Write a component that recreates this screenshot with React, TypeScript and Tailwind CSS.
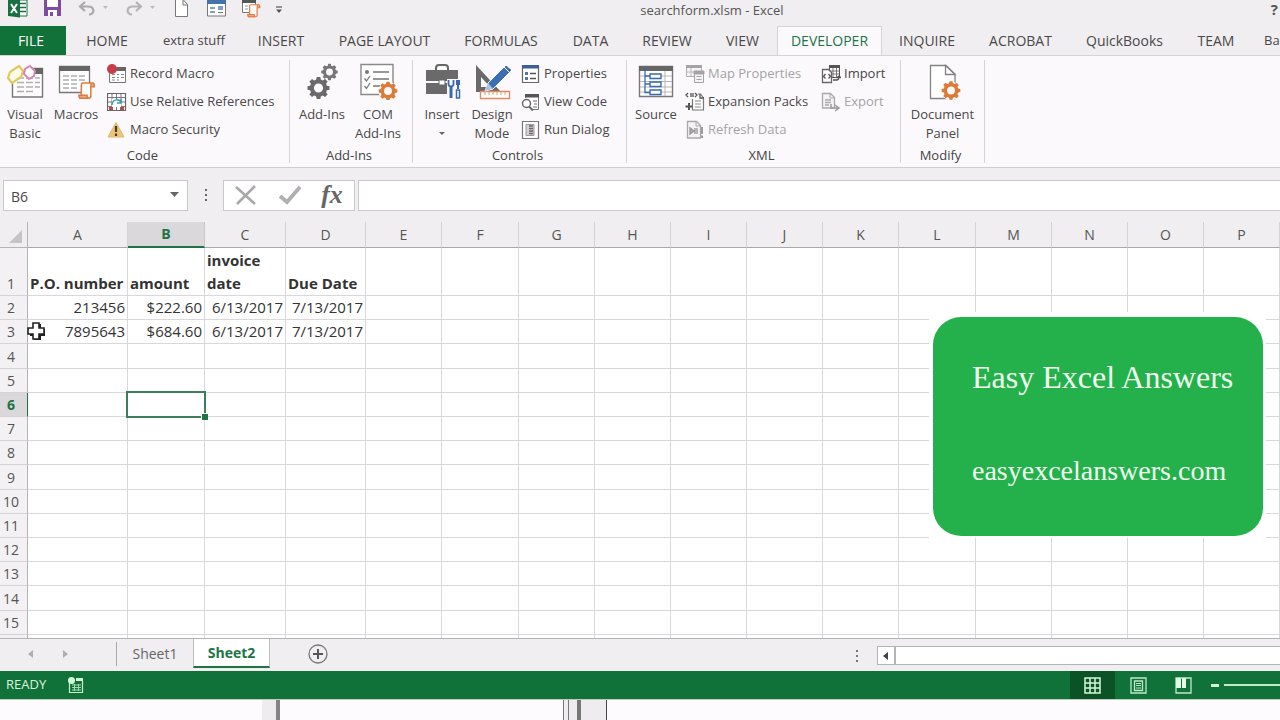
import type { ReactNode } from "react";

const GEAR =
  "M-1.8-11h3.6l.5 2.6 2 .8 2.2-1.5 2.6 2.6-1.500 2.200.8 2 2.6.5v3.6l-2.6.5-.8 2 1.5 2.2-2.6 2.6-2.2-1.500-2 .8-.5 2.6h-3.6l-.5-2.6-2-.8-2.200 1.500-2.600-2.600 1.500-2.200-.8-2-2.600-.5v-3.600l2.600-.5.8-2-1.500-2.200 2.600-2.600 2.200 1.500 2-.8zM0-4.600a4.600 4.600 0 1 0 0 9.200a4.600 4.600 0 1 0 0-9.200z";

function Gear({ x, y, s, fill }: { x: number; y: number; s: number; fill: string }) {
  return <path transform={`translate(${x} ${y}) scale(${s})`} fill={fill} fillRule="evenodd" d={GEAR} />;
}

function Big({ children }: { children: ReactNode }) {
  return (
    <svg viewBox="0 0 40 40" className="h-10 w-10 shrink-0" fill="none" aria-hidden="true">
      {children}
    </svg>
  );
}

function Small({ children }: { children: ReactNode }) {
  return (
    <svg viewBox="0 0 20 20" className="h-5 w-5 shrink-0" fill="none" aria-hidden="true">
      {children}
    </svg>
  );
}

function ScrollShape({ x, y, s }: { x: number; y: number; s: number }) {
  return (
    <g transform={`translate(${x} ${y}) scale(${s})`} stroke="#e07a3f" strokeWidth="1.6" fill="#fff">
      <path d="M5 1h11c-2 0-2.500 1-2.500 3v11c0 1.500-1 2-2.500 2H1.500c1.500 0 2-1 2-2.500V3.500C3.500 2 4 1 5 1z" />
      <path d="M13.500 5H17V3c0-1.200-.5-2-1.500-2M1 14h8.500c0 2 .5 3 1.500 3H2.500C1.500 17 1 16 1 14z" fill="#f3a67b" />
    </g>
  );
}

const VisualBasicIcon = () => (
  <Big>
    <path d="M7.500 15.500V37h30V8.500H28" fill="#fff" stroke="#777" strokeWidth="1.400" />
    <path d="M30 8h8v6h-8z" fill="#666" />
    <path d="M12 18h7m2 0h7m2 0h5M12 22.500h7m2 0h7m2 0h5M12 27h7m2 0h7m2 0h5M12 31.500h7m2 0h7" stroke="#b0adb0" strokeWidth="1.300" />
    <path d="m5 12 9-6 4 5-2 6-9 6-4-5z" fill="#fffbe8" stroke="#dccb62" strokeWidth="2.200" />
    <path d="m20 9 5-3 5 5-1 5-5 3-5-5z" fill="#fff" stroke="#d885ae" strokeWidth="2" />
  </Big>
);

const MacrosIcon = () => (
  <Big>
    <path d="M3.500 6.500h30v26h-30z" fill="#fff" stroke="#777" strokeWidth="1.300" />
    <path d="M3 6h31v5H3z" fill="#666" />
    <path d="M7 16h6m2 0h6m2 0h6M7 20h6m2 0h6m2 0h6M7 24h6m2 0h6M7 28h6m2 0h6" stroke="#b0adb0" strokeWidth="1.300" />
    <ScrollShape x={22} y={22} s={0.95} />
  </Big>
);

const AddInsIcon = () => (
  <Big>
    <Gear x={16.500} y={28} s={1} fill="#6a6a6a" />
    <Gear x={27.500} y={12} s={0.75} fill="#777" />
  </Big>
);

const ComAddInsIcon = () => (
  <Big>
    <path d="M3 4.500h32v30H3z" fill="#fff" stroke="#8a888a" strokeWidth="1.400" />
    <circle cx="9" cy="12" r="2" fill="#777" />
    <path d="M15 12h16M15 19h16M15 26h7" stroke="#777" strokeWidth="1.400" />
    <path d="m6.500 18.500 2 2.500 3.500-5M6.500 26l2 2.500L12 23" stroke="#777" strokeWidth="1.300" />
    <circle cx="30" cy="31" r="9.500" fill="#fbf9fb" />
    <Gear x={30} y={31} s={0.85} fill="#dd7a38" />
  </Big>
);

const InsertIcon = () => (
  <Big>
    <path d="M14 10V8c0-2 1-3 3-3h6c2 0 3 1 3 3v2" stroke="#666" strokeWidth="2" />
    <path d="M4 10h32v11H4zM4 23h32v11H4z" fill="#6a6a6a" />
    <path d="M17 20h6v5h-6z" fill="#fff" stroke="#666" />
    <path d="M25 19h15v20H25z" fill="#fbf9fb" />
    <path d="M26.500 20v4c0 2 1.500 2.500 2.500 2.500s2.500-.5 2.500-2.500v-4" stroke="#396ab0" strokeWidth="1.800" />
    <path d="M27.500 26h3v12h-3z" fill="#396ab0" />
    <path d="M34 20h4v5h-1v4h-2v-4h-1z" fill="#396ab0" />
    <path d="M34.500 30h3v8h-3z" fill="#fff" stroke="#396ab0" strokeWidth="1.500" />
  </Big>
);

const DesignIcon = () => (
  <Big>
    <path fillRule="evenodd" d="M4 5v27h25zM9 17v10h9z" fill="#6a6a6a" />
    <path d="M8.500 31.500h29v7h-29z" fill="#fff" stroke="#e28a66" strokeWidth="1.400" />
    <path d="M13 32v3m4-3v3m4-3v3m4-3v3m4-3v3m4-3v3" stroke="#d9a06a" />
    <path d="m13 31 3-8L34 5l6 5-19 19z" fill="#3d6db5" stroke="#fff" />
    <path d="m13 31 3-8 5 5.500z" fill="#a9c3e6" />
    <path d="m32 7 5.500 5.500" stroke="#fff" />
  </Big>
);

const SourceIcon = () => (
  <Big>
    <path d="M3.500 6.500h33v30h-33z" fill="#fff" stroke="#777" strokeWidth="1.400" />
    <path d="M3 6h34v5H3z" fill="#666" />
    <path d="M4 16h32M4 21.500h32M4 27h32M4 32h32M29 11v25" stroke="#b5b5b5" />
    <path d="M9 7v25.500h5M9 16h5M9 24h5" stroke="#396ab0" strokeWidth="1.300" />
    <path d="M14 14h11v4.500H14zM14 22h11v4.500H14zM14 30h11v4.500H14z" fill="#fff" stroke="#396ab0" strokeWidth="1.400" />
  </Big>
);

const DocumentIcon = () => (
  <Big>
    <path d="M7.500 5.500H23l9 8.500v24.500H7.500z" fill="#fff" stroke="#858285" strokeWidth="1.300" />
    <path d="M22.500 5.500V14.500H32z" fill="#fff" stroke="#858285" strokeWidth="1.300" />
    <circle cx="28" cy="31" r="9.500" fill="#fbf9fb" />
    <Gear x={28} y={30.500} s={0.85} fill="#dd7a38" />
  </Big>
);

const RecordIcon = () => (
  <Small>
    <path d="M2.500 5.500h16v13h-16z" fill="#fff" stroke="#777" />
    <path d="M9 3h10v4H9z" fill="#666" />
    <path d="M5 10.500h3m2 0h2m2 0h3M5 13.500h3m2 0h2m2 0h3M5 16h3m2 0h2" stroke="#888" />
    <circle cx="5" cy="5" r="5" fill="#c53d4a" />
  </Small>
);

const RelativeIcon = () => (
  <Small>
    <path d="M.5 1.500h18v17H.5z" fill="#fff" stroke="#666" strokeWidth="1.200" />
    <path d="M1 5.500h17M1 10h17M1 14.500h17M5 2v16M9.500 2v16M14 2v16" stroke="#777" />
    <path d="M5 7h9v8H5z" fill="#fff" />
    <path d="M5 13c0-5 6-7 9-3M14 7v4h-4" stroke="#3b9bb0" strokeWidth="1.500" />
    <path d="M2 15h4v3H2zM13 15h4v3h-4z" fill="#b34b4b" />
  </Small>
);

const WarningIcon = () => (
  <Small>
    <path d="M9 2.500 17 17H1z" fill="#ecc57c" stroke="#e3b768" strokeLinejoin="round" />
    <path d="M9 6v6M9 13.500V16" stroke="#4a3a20" strokeWidth="2.200" />
  </Small>
);

const PropertiesIcon = () => (
  <Small>
    <path d="M1.500 1.500h16v17h-16z" fill="#fff" stroke="#666" strokeWidth="1.200" />
    <path d="M1 1h17v3.500H1z" fill="#3e5f94" />
    <path d="M4 8h3v3H4zM4 13h3v3H4z" fill="#5577a8" />
    <path d="M9 9.500h6M9 14.500h6" stroke="#555" strokeWidth="1.300" />
  </Small>
);

const ViewCodeIcon = () => (
  <Small>
    <path d="M4.500 6V2.500h13v15H11" fill="#fff" stroke="#777" />
    <path d="M4 2h14v3.500H4z" fill="#555" />
    <path d="M12 9h4M13 12h3M12 15h4" stroke="#666" />
    <circle cx="5.500" cy="11.500" r="4" fill="#fff" stroke="#666" strokeWidth="1.500" />
    <path d="m8 14.500 4 4" stroke="#666" strokeWidth="2" />
  </Small>
);

const RunDialogIcon = () => (
  <Small>
    <path d="M1.500 1.500h16v17h-16z" fill="#fff" stroke="#777" strokeWidth="1.200" />
    <path d="M5 4.500h8v11H5z" fill="#d4d2d4" stroke="#999" />
    <path d="M8 6h4M8 8.500h4M8 11h4M8 13.500h4" stroke="#666" strokeWidth="1.400" />
  </Small>
);

const MapIcon = () => (
  <Small>
    <path d="M1.500 1.500h15v11h-15z" fill="#f5f3f5" stroke="#b0aeb0" />
    <path d="M1 1h16v3H1z" fill="#a5a3a5" />
    <path d="M2 8h14M6 4v8" stroke="#bbb" />
    <path d="M9.500 7.500h9v11h-9z" fill="#f5f3f5" stroke="#a5a3a5" />
    <path d="M9 7h10v3H9zM11.500 12.500h5M11.500 15.500h5" fill="#a5a3a5" stroke="#a5a3a5" />
  </Small>
);

const ExpansionIcon = () => (
  <Small>
    <path d="M7.500 7V18h11V6l-3-4H13" fill="#fff" stroke="#777" strokeWidth="1.200" />
    <path d="m3 1-2 2 2 2M6 1v4M8 1v4m2-4 2 2-2 2M15 2v4h4" stroke="#555" strokeWidth="1.300" />
    <path d="M10 9h6M10 12h6M10 15h6" stroke="#888" />
    <path d="M4 11v7M.5 14.500h7" stroke="#555" strokeWidth="2" />
  </Small>
);

const RefreshIcon = () => (
  <Small>
    <path d="M2.500 1.500h9l4 4V18h-13z" fill="#f5f3f5" stroke="#aaa8aa" strokeWidth="1.300" />
    <path d="M11 2v4h4" stroke="#aaa8aa" />
    <path d="M5 8v6l4-3zM10 8v6M12 8v6" stroke="#9c9a9c" strokeWidth="1.400" fill="#aaa" />
    <path d="M17 7v7M17 15.500V18" stroke="#9c9a9c" strokeWidth="2" />
  </Small>
);

const ImportIcon = () => (
  <Small>
    <path d="M8.500 1.500h10v12h-10z" fill="#fff" stroke="#555" />
    <path d="M8 1h11v3H8z" fill="#555" />
    <path d="M9 7h9M9 10h9M12 4v9M15.500 4v9" stroke="#777" />
    <path d="M1.500 5.500h6l3 3v10h-9z" fill="#fff" stroke="#666" strokeWidth="1.300" />
    <path d="m4.500 10-2 2.500 2 2m3-4.500 2 2.500-2 2M12 16h3.500c2 0 2.500-1 2.500-3m-2.500 1 2.500-2 2 2" stroke="#555" strokeWidth="1.300" />
  </Small>
);

const ExportIcon = () => (
  <Small>
    <path d="M1.500 1.500h8l4 4V16h-12z" fill="#f5f3f5" stroke="#aaa8aa" strokeWidth="1.300" />
    <path d="M9 2v4h4" stroke="#aaa8aa" />
    <path d="M4 8h6M4 10.500h6M4 13h4" stroke="#aaa8aa" strokeWidth="1.500" />
    <path d="M10 12v4h7m-3-3 4 3-4 3" stroke="#9c9a9c" strokeWidth="1.500" />
  </Small>
);

function BigButton({ icon, lines, width, caret }: { icon: ReactNode; lines: string[]; width: string; caret?: boolean }) {
  return (
    <button type="button" className={`flex shrink-0 flex-col items-center ${width}`}>
      {icon}
      <span className="mt-[5px] flex flex-col items-center whitespace-nowrap leading-[19px]">
        {lines.map((l) => (
          <span key={l}>{l}</span>
        ))}
        {caret && (
          <svg viewBox="0 0 6 19" className="h-[19px] w-[6px]" aria-hidden="true">
            <path d="M0 8h6l-3 3z" fill="#666" />
          </svg>
        )}
      </span>
    </button>
  );
}

function SmallButton({ icon, label, disabled }: { icon: ReactNode; label: string; disabled?: boolean }) {
  return (
    <button type="button" disabled={disabled} className="flex h-7 items-center gap-[3px] whitespace-nowrap disabled:text-[#a5a3a5]">
      {icon}
      {label}
    </button>
  );
}

function Group({ name, width, children }: { name: string; width: string; children: ReactNode }) {
  return (
    <section aria-label={name} className={`flex shrink-0 flex-col border-r border-[#d5d3d5] ${width}`}>
      <div className="flex h-[88px] items-start">{children}</div>
      <div className="pr-1 pt-[2px] text-center leading-[16px] text-[#444]">{name}</div>
    </section>
  );
}

const TABS = [
  { label: "HOME", w: "w-[82px]" },
  { label: "extra stuff", w: "w-[92px] text-[13px]" },
  { label: "INSERT", w: "w-[82px]" },
  { label: "PAGE LAYOUT", w: "w-[125px]" },
  { label: "FORMULAS", w: "w-[108px]" },
  { label: "DATA", w: "w-[71px]" },
  { label: "REVIEW", w: "w-[82px]" },
  { label: "VIEW", w: "w-[69px]" },
  { label: "DEVELOPER", w: "w-[105px]" },
  { label: "INQUIRE", w: "w-[90px]" },
  { label: "ACROBAT", w: "w-[97px]" },
  { label: "QuickBooks", w: "w-[111px]" },
  { label: "TEAM", w: "w-[72px]" },
];

const COLUMNS = [
  { n: "A", w: "w-[100px]" },
  { n: "B", w: "w-[77px]" },
  { n: "C", w: "w-[81px]" },
  { n: "D", w: "w-[80px]" },
  { n: "E", w: "w-[76px]" },
  { n: "F", w: "w-[77px]" },
  { n: "G", w: "w-[76px]" },
  { n: "H", w: "w-[76px]" },
  { n: "I", w: "w-[76px]" },
  { n: "J", w: "w-[76px]" },
  { n: "K", w: "w-[76px]" },
  { n: "L", w: "w-[77px]" },
  { n: "M", w: "w-[76px]" },
  { n: "N", w: "w-[76px]" },
  { n: "O", w: "w-[76px]" },
  { n: "P", w: "w-[76px]" },
];

const DATA: Record<number, string[]> = {
  1: ["P.O. number", "amount", "invoice date", "Due Date"],
  2: ["213456", "$222.60", "6/13/2017", "7/13/2017"],
  3: ["7895643", "$684.60", "6/13/2017", "7/13/2017"],
};

const ROWS = Array.from({ length: 15 }, (_, i) => i + 1);

function TitleBar() {
  return (
    <header className="flex h-[26px] shrink-0 items-start text-[#555]">
      <div className="flex w-[284px] shrink-0">
        <svg viewBox="0 0 284 20" className="h-5 w-[284px]" fill="none" aria-label="Quick access toolbar">
          <path d="M19 0h8v16h-8z" fill="#fff" stroke="#1d7044" />
          <path d="M20 3.500h6M20 7.500h6M20 11.500h6" stroke="#1d7044" strokeWidth="1.500" />
          <path d="M8 0h12v17.500L8 16z" fill="#17703f" />
          <path d="m11 4 6 9m0-9-6 9" stroke="#fff" strokeWidth="2" />
          <path d="M44 0h17v16H44z" fill="#7d4ba0" />
          <path d="M47 0h11v7H47zM48 10h9v6h-9z" fill="#fff" />
          <path d="M50 12h3v4h-3z" fill="#7d4ba0" />
          <path d="M85 2 80 6.500l5 4.500M80 6.500h8c7 0 7 8 1 8" stroke="#aba9ab" strokeWidth="2.200" />
          <path d="M103 6h5l-2.500 3zM150 6h5l-2.500 3z" fill="#bbb" />
          <path d="m136 2 5 4.500-5 4.500M141 6.500h-8c-7 0-7 8-1 8" stroke="#b5b3b5" strokeWidth="2.200" />
          <path d="M175.500 0v16.500h12V4.500L183.500 0M183 0v5h5" fill="#fff" stroke="#777" />
          <path d="M207.500.5h18v15.500h-18z" fill="#fff" stroke="#777" />
          <path d="M207 0h19v4h-19z" fill="#4472a8" />
          <path d="M210 7h5v2h-5zM210 11h5v2h-5zM218 6h5v4h-5z" fill="#7fa0cb" />
          <path d="M218 12.500h5" stroke="#777" />
          <path d="M242.500.5h13v12h-13z" fill="#fff" stroke="#777" />
          <path d="M242 0h14v3h-14z" fill="#555" />
          <path d="M245 6h3m2 0h3M245 9h3" stroke="#999" />
          <ScrollShape x={247} y={4} s={0.75} />
          <path d="M276 7h6" stroke="#555" strokeWidth="1.200" />
          <path d="M276 9.500h6l-3 3.500z" fill="#555" />
        </svg>
      </div>
      <h1 className="flex-1 text-center leading-[20px]">searchform.xlsm - Excel</h1>
      <div className="flex w-[140px] shrink-0 justify-end pr-[2px]">
        <button type="button" aria-label="Help" className="text-[15px] font-bold leading-[18px]">?</button>
      </div>
    </header>
  );
}

function RibbonTabs() {
  return (
    <nav className="flex h-[30px] shrink-0 overflow-hidden border-b border-[#d5d3d5] text-sm">
      <button type="button" className="w-[66px] shrink-0 bg-[#117239] pr-1 text-white">FILE</button>
      {TABS.map((t) => (
        <button
          key={t.label}
          type="button"
          className={`shrink-0 whitespace-nowrap ${t.w} ${
            t.label === "DEVELOPER" ? "border-x border-t border-[#d5d3d5] bg-[#fbf9fb] text-[#217346]" : ""
          }`}
        >
          {t.label}
        </button>
      ))}
      <button type="button" className="shrink-0 pl-3 text-[13px]">Ba</button>
    </nav>
  );
}

function Ribbon() {
  return (
    <div className="flex h-[112px] shrink-0 overflow-hidden border-b border-[#cfcdcf] bg-[#fbf9fb] pb-1 pt-1">
      <Group name="Code" width="w-[290px]">
        <BigButton icon={<VisualBasicIcon />} lines={["Visual", "Basic"]} width="w-[50px]" />
        <BigButton icon={<MacrosIcon />} lines={["Macros"]} width="w-[52px]" />
        <div className="pl-[5px]">
          <SmallButton icon={<RecordIcon />} label="Record Macro" />
          <SmallButton icon={<RelativeIcon />} label="Use Relative References" />
          <SmallButton icon={<WarningIcon />} label="Macro Security" />
        </div>
      </Group>
      <Group name="Add-Ins" width="w-[123px]">
        <div className="flex pl-[2px]">
          <BigButton icon={<AddInsIcon />} lines={["Add-Ins"]} width="w-[60px]" />
          <BigButton icon={<ComAddInsIcon />} lines={["COM", "Add-Ins"]} width="w-[52px]" />
        </div>
      </Group>
      <Group name="Controls" width="w-[214px]">
        <div className="flex pl-1">
          <BigButton icon={<InsertIcon />} lines={["Insert"]} width="w-[50px]" caret />
          <BigButton icon={<DesignIcon />} lines={["Design", "Mode"]} width="w-[50px]" />
        </div>
        <div className="pl-1">
          <SmallButton icon={<PropertiesIcon />} label="Properties" />
          <SmallButton icon={<ViewCodeIcon />} label="View Code" />
          <SmallButton icon={<RunDialogIcon />} label="Run Dialog" />
        </div>
      </Group>
      <Group name="XML" width="w-[274px]">
        <div className="flex pl-1">
          <BigButton icon={<SourceIcon />} lines={["Source"]} width="w-[50px]" />
        </div>
        <div className="w-[140px] pl-1">
          <SmallButton icon={<MapIcon />} label="Map Properties" disabled />
          <SmallButton icon={<ExpansionIcon />} label="Expansion Packs" />
          <SmallButton icon={<RefreshIcon />} label="Refresh Data" disabled />
        </div>
        <div>
          <SmallButton icon={<ImportIcon />} label="Import" />
          <SmallButton icon={<ExportIcon />} label="Export" disabled />
        </div>
      </Group>
      <Group name="Modify" width="w-[84px]">
        <BigButton icon={<DocumentIcon />} lines={["Document", "Panel"]} width="w-full" />
      </Group>
    </div>
  );
}

function FormulaBar() {
  return (
    <div className="flex h-[54px] shrink-0 items-center pl-[3px]">
      <div className="flex h-[31px] w-[185px] shrink-0 items-center border border-[#c9c7c9] bg-white">
        <input aria-label="Name box" defaultValue="B6" className="h-full min-w-0 flex-1 bg-transparent pl-[7px] pt-[2px] text-sm outline-none" />
        <button type="button" aria-label="Open name list" className="w-6">
          <svg viewBox="0 0 24 10" className="h-[10px] w-6" aria-hidden="true">
            <path d="M7 2h9l-4.500 5z" fill="#666" />
          </svg>
        </button>
      </div>
      <svg viewBox="0 0 35 16" className="h-4 w-[35px] shrink-0" aria-hidden="true">
        <path d="M17 2h2v2h-2zM17 7h2v2h-2zM17 12h2v2h-2z" fill="#666" />
      </svg>
      <div className="flex h-[31px] w-[132px] shrink-0 items-center border border-[#c9c7c9] bg-white">
        <button type="button" aria-label="Cancel" className="flex w-11 justify-center">
          <svg viewBox="0 0 22 20" className="h-5 w-[22px]" aria-hidden="true">
            <path d="m1 2 19 17M20 1 2 19" stroke="#a9a7a9" strokeWidth="2.600" fill="none" />
          </svg>
        </button>
        <button type="button" aria-label="Enter" className="flex w-11 justify-center">
          <svg viewBox="0 0 22 20" className="h-5 w-[22px]" aria-hidden="true">
            <path d="m1 11 7 6L21 2" stroke="#b1afb1" strokeWidth="3.800" fill="none" />
          </svg>
        </button>
        <button type="button" aria-label="Insert function" className="w-10 font-['Liberation_Serif',serif] text-[26px] font-bold italic leading-[26px] text-[#666]">
          fx
        </button>
      </div>
      <input aria-label="Formula" className="ml-[3px] h-[31px] min-w-0 flex-1 border border-r-0 border-[#c9c7c9] bg-white px-2 outline-none" />
    </div>
  );
}

function Sheet() {
  return (
    <main className="relative h-[416px] shrink-0 overflow-hidden bg-white">
      <table className="w-full table-fixed border-separate border-spacing-0">
        <colgroup>
          <col className="w-[28px]" />
          {COLUMNS.map((c) => (
            <col key={c.n} className={c.w} />
          ))}
          <col />
        </colgroup>
        <thead>
          <tr className="h-[26px] bg-[#f0eef0] text-sm text-[#555]">
            <td className="border-b border-r border-[#b5b3b5] p-0">
              <svg viewBox="0 0 27 25" className="h-[25px] w-[27px]" aria-label="Select all">
                <path d="M22 8v13H9z" fill="#c5c3c5" />
              </svg>
            </td>
            {COLUMNS.map((c) => (
              <th
                key={c.n}
                scope="col"
                className={
                  c.n === "B"
                    ? "border-b-2 border-r border-b-[#217346] border-r-[#c9c7c9] bg-[#dad8da] p-0 font-bold leading-[22px] text-[#217346]"
                    : "border-b border-r border-b-[#aaa8aa] border-r-[#d5d3d5] p-0 font-normal leading-[22px]"
                }
              >
                {c.n}
              </th>
            ))}
            <td className="border-b border-[#aaa8aa] p-0" />
          </tr>
        </thead>
        <tbody>
          {ROWS.map((r) => (
            <tr key={r} className={r === 1 ? "h-[48px]" : r % 5 === 4 ? "h-[25px]" : "h-[24px]"}>
              <th
                scope="row"
                className={`border-b border-r border-b-[#d5d3d5] p-0 pr-[5px] text-center align-bottom text-sm leading-[23px] ${
                  r === 6 ? "border-r-[#217346] bg-[#dad8da] font-bold text-[#217346]" : "border-r-[#b5b3b5] bg-[#f3f1f3] font-normal text-[#555]"
                }`}
              >
                {r}
              </th>
              {COLUMNS.map((c, i) => (
                <td
                  key={c.n}
                  className={`border-b border-r border-[#d9d7dc] p-0 align-bottom text-[15px] text-[#333] ${
                    r === 1 ? "pl-[2px] font-bold leading-[23px]" : "pr-[2px] text-right leading-[23px]"
                  } ${r === 6 && i === 1 ? "relative" : ""}`}
                >
                  {DATA[r]?.[i]}
                  {r === 6 && i === 1 && (
                    <span className="absolute -inset-[2px] border-2 border-[#3c7d5c]">
                      <span className="absolute -bottom-1 -right-1 h-[7px] w-[7px] border-l border-t border-white bg-[#217346]" />
                    </span>
                  )}
                </td>
              ))}
              <td className="border-b border-[#d9d7dc] p-0" />
            </tr>
          ))}
          <tr className="h-6">
            <td className="border-r border-[#b5b3b5] bg-[#f3f1f3] p-0" />
            {COLUMNS.map((c) => (
              <td key={c.n} className="border-r border-[#d9d7dc] p-0" />
            ))}
            <td className="p-0" />
          </tr>
        </tbody>
      </table>

      <svg viewBox="0 0 20 20" className="absolute left-[26px] top-[99px] h-5 w-5" aria-hidden="true">
        <path d="M8 3h7v5h4v7h-4v4H8v-4H4V8h4z" fill="#222" />
        <path d="M7 2h6v5h5v6h-5v5H7v-5H2V7h5z" fill="#fff" stroke="#222" strokeWidth="1.600" />
      </svg>

      <aside className="absolute right-[14px] top-[90px] bg-white pb-[2px] pl-1 pr-[3px] pt-[5px]">
        <div className="flex h-[219px] w-[330px] flex-col gap-[54px] rounded-[28px] bg-[#24b14c] pl-[39px] pt-[40px] font-['Liberation_Serif',serif] leading-[40px] text-[#f0fff0]">
          <p className="whitespace-nowrap text-[32px]">Easy Excel Answers</p>
          <p className="whitespace-nowrap text-[28px]">easyexcelanswers.com</p>
        </div>
      </aside>
    </main>
  );
}

function SheetTabs() {
  return (
    <div className="flex h-[33px] shrink-0 items-start border-t border-[#b5b3b5] text-sm">
      <div className="flex h-[30px] w-[116px] items-center gap-7 pl-7">
        <button type="button" aria-label="Previous sheet">
          <svg viewBox="0 0 6 8" className="h-2 w-[6px]" aria-hidden="true"><path d="M5 0v8L0 4z" fill="#b0aeb0" /></svg>
        </button>
        <button type="button" aria-label="Next sheet">
          <svg viewBox="0 0 6 8" className="h-2 w-[6px]" aria-hidden="true"><path d="M1 0v8l5-4z" fill="#b0aeb0" /></svg>
        </button>
      </div>
      <button type="button" className="mt-[3px] h-6 w-[77px] border-l border-[#aaa8aa] text-[#666]">Sheet1</button>
      <button type="button" className="h-[29px] w-[77px] border-x border-b-2 border-x-[#c0bec0] border-b-[#217346] bg-white pt-px font-bold text-[#217346]">
        Sheet2
      </button>
      <button type="button" aria-label="New sheet" className="ml-[38px] mt-[5px]">
        <svg viewBox="0 0 20 20" className="h-5 w-5" fill="none" aria-hidden="true">
          <circle cx="10" cy="10" r="9" stroke="#777" strokeWidth="1.300" />
          <path d="M10 5v10M5 10h10" stroke="#555" strokeWidth="2" />
        </svg>
      </button>
      <div className="ml-auto flex h-[33px] w-[426px] items-center">
        <svg viewBox="0 0 6 14" className="h-[14px] w-[6px]" aria-hidden="true">
          <path d="M2 1h2v2H2zM2 6h2v2H2zM2 11h2v2H2z" fill="#777" />
        </svg>
        <div className="ml-[17px] flex h-[19px] flex-1 border-y border-l border-[#b5b3b5] bg-white">
          <button type="button" aria-label="Scroll left" className="flex w-[18px] items-center justify-center border-r-2 border-[#b5b3b5]">
            <svg viewBox="0 0 6 8" className="h-2 w-[6px]" aria-hidden="true"><path d="M5 0v8L0 4z" fill="#444" /></svg>
          </button>
        </div>
      </div>
    </div>
  );
}

function StatusBar() {
  return (
    <footer className="flex h-7 shrink-0 items-center bg-[#117239] pl-[6px] text-[13px] text-[#d9f5df]">
      <span className="w-[62px]">READY</span>
      <svg viewBox="0 0 16 16" className="h-4 w-4" fill="none" aria-hidden="true">
        <path d="M1.500 5v10.500h13V4" stroke="#c5efcc" strokeWidth="1.200" />
        <path d="M8 1h7v3H8z" fill="#d6f7da" />
        <path d="M4 8h9M4 10.500h9M4 13h9M6.500 7v7M10.500 7v7" stroke="#a5dab0" />
        <circle cx="3.500" cy="3.500" r="3.500" fill="#d6f7da" />
      </svg>
      <div className="ml-auto flex h-full items-center">
        <button type="button" aria-label="Normal view" className="flex h-full w-[45px] items-center justify-center bg-[#0b5226]">
          <svg viewBox="0 0 17 17" className="h-[17px] w-[17px]" fill="none" aria-hidden="true">
            <path d="M1 1h15v15H1zM1 6h15M1 11h15M6 1v15M11 1v15" stroke="#d6f7da" strokeWidth="1.500" />
          </svg>
        </button>
        <button type="button" aria-label="Page layout view" className="flex h-full w-[46px] items-center justify-center">
          <svg viewBox="0 0 17 17" className="h-[17px] w-[17px]" fill="none" aria-hidden="true">
            <path d="M1 1h15v15H1zM4.500 4h8v9.500h-8z" stroke="#bfeac8" strokeWidth="1.300" />
            <path d="M6 6.500h5M6 8.500h5M6 11h5" stroke="#bfeac8" />
          </svg>
        </button>
        <button type="button" aria-label="Page break view" className="flex h-full w-[45px] items-center justify-center">
          <svg viewBox="0 0 17 17" className="h-[17px] w-[17px]" fill="none" aria-hidden="true">
            <path d="M1 1h15v15H1z" stroke="#bfeac8" strokeWidth="1.300" />
            <path d="M1 1h5v10H1zM7 1h4v10H7z" fill="#e2fbe5" />
          </svg>
        </button>
        <button type="button" aria-label="Zoom out" className="flex w-[18px] justify-center">
          <span className="h-[3px] w-2 bg-[#d6f7da]" />
        </button>
        <span className="h-[2px] w-14 bg-[#bfeac8]" />
      </div>
    </footer>
  );
}

function Desktop() {
  return (
    <div className="flex min-h-[21px] flex-1 border-t border-[#b9ccbd] bg-[#fdfbfd]">
      <div className="w-[262px]" />
      <div className="w-[18px] border-r-4 border-[#858385] bg-[#eeecee]" />
      <div className="w-[283px]" />
      <div className="w-[6px] border-x border-[#777] bg-[#eeecee]" />
      <div className="w-3 border-r-4 border-[#777] bg-[#eeecee]" />
      <div className="w-[26px] border-r border-[#444] bg-[#eeecee]" />
    </div>
  );
}

export default function App() {
  return (
    <div className="flex h-screen w-full flex-col overflow-hidden bg-[#f0eef0] font-['Open_Sans','Liberation_Sans',sans-serif] text-[13px] text-[#4a484a]">
      <TitleBar />
      <RibbonTabs />
      <Ribbon />
      <FormulaBar />
      <Sheet />
      <SheetTabs />
      <StatusBar />
      <Desktop />
    </div>
  );
}
